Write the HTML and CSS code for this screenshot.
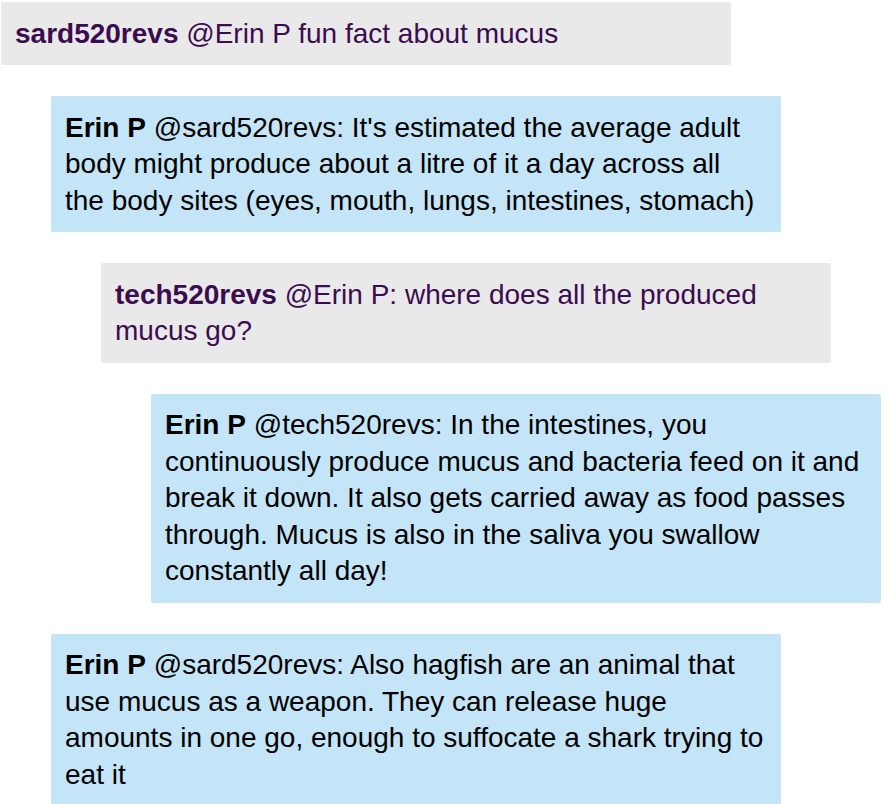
FILE: index.html
```html
<!DOCTYPE html>
<html>
<head>
<meta charset="utf-8">
<link rel="stylesheet" href="styles.css">
</head>
<body>
<div class="thread">
  <div class="msg grey lvl0"><span class="name">sard520revs</span> @Erin P fun fact about mucus</div>
  <div class="msg blue lvl1"><span class="name">Erin P</span> @sard520revs: It's estimated the average adult body might produce about a litre of it a day across all the body sites (eyes, mouth, lungs, intestines, stomach)</div>
  <div class="msg grey lvl2"><span class="name">tech520revs</span> @Erin P: where does all the produced mucus go?</div>
  <div class="msg blue lvl3"><span class="name">Erin P</span> @tech520revs: In the intestines, you continuously produce mucus and bacteria feed on it and break it down. It also gets carried away as food passes through. Mucus is also in the saliva you swallow constantly all day!</div>
  <div class="msg blue lvl1"><span class="name">Erin P</span> @sard520revs: Also hagfish are an animal that use mucus as a weapon. They can release huge amounts in one go, enough to suffocate a shark trying to eat it</div>
</div>
</body>
</html>
```

FILE: styles.css
```css
html, body {
  margin: 0;
  padding: 0;
  background: #ffffff;
}
.thread {
  display: flex;
  flex-direction: column;
  gap: 31px;
  padding: 2px 0 0 1px;
  font-family: "Liberation Sans", Arial, sans-serif;
  font-size: 28px;
  line-height: 36.5px;
}
.msg {
  width: 730px;
  box-sizing: border-box;
  padding: 13.5px 16px 13px 14px;
  border-radius: 2px;
}
.grey {
  background: #e9e9e9;
  color: #3b0c4f;
}
.blue {
  background: #c3e5f7;
  color: #000000;
}
.name {
  font-weight: bold;
}
.lvl0 { margin-left: 0; }
.lvl1 { margin-left: 50px; }
.lvl2 { margin-left: 100px; }
.lvl3 { margin-left: 150px; }
```
